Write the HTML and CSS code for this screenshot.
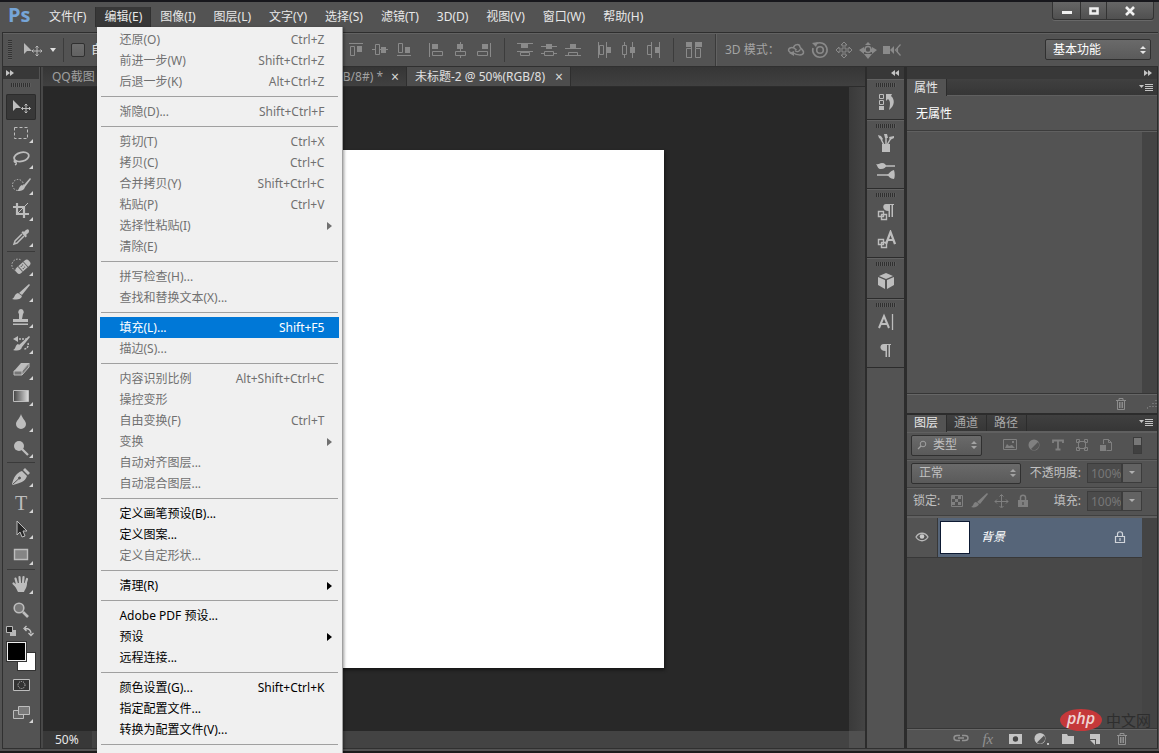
FILE: index.html
```html
<!DOCTYPE html>
<html lang="zh-CN">
<head>
<meta charset="utf-8">
<meta name="viewport" content="width=device-width, initial-scale=1">
<title>未标题-2 @ 50%(RGB/8)</title>
<link rel="stylesheet" href="styles.css">
</head>
<body>
<div class="app">
  <header class="menubar">
    <div class="logo">Ps</div>
    <nav class="menus" aria-label="主菜单">
      <div class="menu"><button class="menu-title">文件(F)</button></div>
      <div class="menu">
        <button class="menu-title is-open" aria-expanded="true">编辑(E)</button>
        <div class="dropdown" role="menu">
          <button class="item" disabled><span>还原(O)</span><kbd>Ctrl+Z</kbd></button>
          <button class="item" disabled><span>前进一步(W)</span><kbd>Shift+Ctrl+Z</kbd></button>
          <button class="item" disabled><span>后退一步(K)</span><kbd>Alt+Ctrl+Z</kbd></button>
          <hr class="rule">
          <button class="item" disabled><span>渐隐(D)...</span><kbd>Shift+Ctrl+F</kbd></button>
          <hr class="rule">
          <button class="item" disabled><span>剪切(T)</span><kbd>Ctrl+X</kbd></button>
          <button class="item" disabled><span>拷贝(C)</span><kbd>Ctrl+C</kbd></button>
          <button class="item" disabled><span>合并拷贝(Y)</span><kbd>Shift+Ctrl+C</kbd></button>
          <button class="item" disabled><span>粘贴(P)</span><kbd>Ctrl+V</kbd></button>
          <button class="item has-sub" disabled><span>选择性粘贴(I)</span></button>
          <button class="item" disabled><span>清除(E)</span></button>
          <hr class="rule">
          <button class="item" disabled><span>拼写检查(H)...</span></button>
          <button class="item" disabled><span>查找和替换文本(X)...</span></button>
          <hr class="rule">
          <button class="item is-active"><span>填充(L)...</span><kbd>Shift+F5</kbd></button>
          <button class="item" disabled><span>描边(S)...</span></button>
          <hr class="rule">
          <button class="item" disabled><span>内容识别比例</span><kbd>Alt+Shift+Ctrl+C</kbd></button>
          <button class="item" disabled><span>操控变形</span></button>
          <button class="item" disabled><span>自由变换(F)</span><kbd>Ctrl+T</kbd></button>
          <button class="item has-sub" disabled><span>变换</span></button>
          <button class="item" disabled><span>自动对齐图层...</span></button>
          <button class="item" disabled><span>自动混合图层...</span></button>
          <hr class="rule">
          <button class="item"><span>定义画笔预设(B)...</span></button>
          <button class="item"><span>定义图案...</span></button>
          <button class="item" disabled><span>定义自定形状...</span></button>
          <hr class="rule">
          <button class="item has-sub"><span>清理(R)</span></button>
          <hr class="rule">
          <button class="item"><span>Adobe PDF 预设...</span></button>
          <button class="item has-sub"><span>预设</span></button>
          <button class="item"><span>远程连接...</span></button>
          <hr class="rule">
          <button class="item"><span>颜色设置(G)...</span><kbd>Shift+Ctrl+K</kbd></button>
          <button class="item"><span>指定配置文件...</span></button>
          <button class="item"><span>转换为配置文件(V)...</span></button>
          <hr class="rule">
        </div>
      </div>
      <div class="menu"><button class="menu-title">图像(I)</button></div>
      <div class="menu"><button class="menu-title">图层(L)</button></div>
      <div class="menu"><button class="menu-title">文字(Y)</button></div>
      <div class="menu"><button class="menu-title">选择(S)</button></div>
      <div class="menu"><button class="menu-title">滤镜(T)</button></div>
      <div class="menu"><button class="menu-title">3D(D)</button></div>
      <div class="menu"><button class="menu-title">视图(V)</button></div>
      <div class="menu"><button class="menu-title">窗口(W)</button></div>
      <div class="menu"><button class="menu-title">帮助(H)</button></div>
    </nav>
    <div class="window-buttons">
      <button aria-label="最小化"><svg width="12" height="12" viewBox="0 0 12 12"><path d="M1 6h10v3H1z" fill="#f0f0f0"/></svg></button>
      <button aria-label="最大化"><svg width="12" height="12" viewBox="0 0 12 12"><path d="M2.500 3.500h7v5h-7z" fill="none" stroke="#f0f0f0" stroke-width="2.600"/></svg></button>
      <button class="close" aria-label="关闭"><svg width="12" height="12" viewBox="0 0 12 12"><path d="M2 2l8 8M10 2l-8 8" stroke="#f0f0f0" stroke-width="2.600"/></svg></button>
    </div>
  </header>

  <div class="options">
    <div class="options-left">
      <span class="grip-v"></span>
      <svg class="move" width="20" height="18" viewBox="0 0 20 18"><path d="M1 2v11l3-3h5z" fill="#b8b8b8"/><path d="M14 5v10M9 10h10M12.500 6.500L14 5l1.500 1.500M12.500 13.500L14 15l1.500-1.500M10.500 8.500L9 10l1.500 1.500M17.500 8.500L19 10l-1.500 1.500" fill="none" stroke="#b8b8b8"/></svg>
      <svg width="8" height="6" viewBox="0 0 8 6"><path d="M1 1h6L4 5z" fill="#e0e0e0"/></svg>
      <span class="divider tight"></span>
      <label class="check"><input type="checkbox">自动</label>
    </div>
    <div class="icons">
      <button class="opt" aria-label="顶对齐"><svg viewBox="0 0 18 18"><path d="M2 2.500h14M3.500 5.500h4v9h-4z"/><path class="f" d="M10 5h5v6h-5z"/></svg></button>
      <button class="opt" aria-label="垂直居中对齐"><svg viewBox="0 0 18 18"><path d="M1 8.500h3M8 8.500h9M4.500 3.500h4v10h-4z"/><path class="f" d="M10 6h5v6h-5z"/></svg></button>
      <button class="opt" aria-label="底对齐"><svg viewBox="0 0 18 18"><path d="M2 14.500h14M3.500 2.500h4v9h-4z"/><path class="f" d="M10 6h5v6h-5z"/></svg></button>
    </div>
    <div class="icons">
      <button class="opt" aria-label="左对齐"><svg viewBox="0 0 18 18"><path d="M2.500 2v14M5.500 10.500h10v4h-10z"/><path class="f" d="M5 3h6v5H5z"/></svg></button>
      <button class="opt" aria-label="水平居中对齐"><svg viewBox="0 0 18 18"><path d="M9.500 1v3M9.500 8v3M9.500 14v3M4.500 10.500h10v4h-10z"/><path class="f" d="M6 3h6v5H6z"/></svg></button>
      <button class="opt" aria-label="右对齐"><svg viewBox="0 0 18 18"><path d="M15.500 2v14M2.500 10.500h10v4h-10z"/><path class="f" d="M7 3h6v5H7z"/></svg></button>
    </div>
    <span class="divider"></span>
    <div class="icons">
      <button class="opt" aria-label="按顶分布"><svg viewBox="0 0 18 18"><path d="M1 2.500h16M1 10.500h16M4.500 11.500h9v3h-9z"/><path class="f" d="M5 3h7v4H5z"/></svg></button>
      <button class="opt" aria-label="垂直居中分布"><svg viewBox="0 0 18 18"><path d="M1 5.500h16M1 12.500h3M14 12.500h3M4.500 10.500h9v4h-9z"/><path class="f" d="M6 3h6v5H6z"/></svg></button>
      <button class="opt" aria-label="按底分布"><svg viewBox="0 0 18 18"><path d="M1 7.500h16M1 14.500h16M4.500 11.500h9v3h-9z"/><path class="f" d="M6 3h6v4H6z"/></svg></button>
    </div>
    <div class="icons">
      <button class="opt" aria-label="按左分布"><svg viewBox="0 0 18 18"><path d="M2.500 1v16M10.500 1v16M3.500 4.500h4v9h-4z"/><path class="f" d="M11 6h4v6h-4z"/></svg></button>
      <button class="opt" aria-label="水平居中分布"><svg viewBox="0 0 18 18"><path d="M4.500 1v3M4.500 14v3M12.500 1v16M2.500 4.500h4v9h-4z"/><path class="f" d="M10 6h5v6h-5z"/></svg></button>
      <button class="opt" aria-label="按右分布"><svg viewBox="0 0 18 18"><path d="M7.500 1v16M15.500 1v16M3.500 4.500h4v9h-4z"/><path class="f" d="M11 6h4v6h-4z"/></svg></button>
    </div>
    <span class="divider"></span>
    <div class="icons">
      <button class="opt" aria-label="自动对齐图层"><svg viewBox="0 0 18 18"><path d="M1.500 7.500h5v9h-5zM10.500 7.500h5v9h-5zM6.500 1v16M10.500 1v6M16.500 1v5"/><path class="f" d="M1 1h5v5H1zM11 1h5v5h-5z"/></svg></button>
    </div>
    <span class="divider light"></span>
    <span class="mode-label">3D 模式：</span>
    <div class="icons">
      <button class="opt" aria-label="旋转 3D 对象"><svg viewBox="0 0 18 18"><path d="M6 12C2 12 0 8.500 3 7c2-1 4.500 0 6.500 2M6.500 6.500c1-3.500 6-4 6.500-.5 1 2 4 3 3.500 6-1 3-7 2-10 0" stroke-width="1.500"/><path d="M8 9.500c2 2 5 1 5.500-2" stroke-width="1.300"/><path class="f" d="M2 12l5-2v5z"/></svg></button>
      <button class="opt" aria-label="滚动 3D 对象"><svg viewBox="0 0 18 18"><path d="M5 3a7.200 7.200 0 1 1-3 4" stroke-width="1.600"/><circle cx="9" cy="9" r="3.300" stroke-width="1.600"/><path class="f" d="M1 2l6-1-2 5z"/></svg></button>
      <button class="opt" aria-label="拖动 3D 对象"><svg viewBox="0 0 18 18"><path d="M9 1l3 3h-2v4h4V6l3 3-3 3v-2h-4v4h2l-3 3-3-3h2v-4H4v2L1 9l3-3v2h4V4H6z"/></svg></button>
      <button class="opt" aria-label="滑动 3D 对象"><svg viewBox="0 0 18 18"><path class="f" d="M0 9l5-3v2h2v3H5v2zM18 9l-5-3v2h-2v3h2v2zM9 18l-4-5h8zM9 1l3 3H6z"/><circle cx="9" cy="8.500" r="3" stroke-width="1.600"/></svg></button>
      <button class="opt" aria-label="缩放 3D 对象"><svg viewBox="0 0 18 18"><path class="f" d="M0 5h7v8H0zM7 9l4-4v8z"/><path d="M17.500 3.500l-5 5.500 5 5.500M14.500 7v4" stroke-width="1.200"/></svg></button>
    </div>
    <span class="select workspace-select">
      <select aria-label="工作区"><option>基本功能</option></select>
      <svg width="8" height="10" viewBox="0 0 8 10"><path d="M1 4l3-3 3 3zM1 6l3 3 3-3z" fill="#e6e6e6"/></svg>
    </span>
  </div>

  <main class="workspace">
    <aside class="toolbar">
      <div class="rail-head left"><svg width="8" height="6" viewBox="0 0 8 6"><path d="M0 0l4 3-4 3zM4 0l4 3-4 3z" fill="#c4c4c4"/></svg></div>
      <div class="grip-h"></div>
      <div class="tools">
        <button class="tool is-active solo" aria-label="移动工具"><svg viewBox="0 0 20 20"><path class="f" d="M2 3v11l3-3h5z"/><path d="M15 7v9M10.500 11.500h9M13.500 8.500L15 7l1.500 1.500M13.500 14.500L15 16l1.500-1.500M12 10l-1.500 1.500L12 13M18 10l1.500 1.500L18 13"/></svg></button>
        <button class="tool" aria-label="矩形选框工具"><svg viewBox="0 0 20 20"><path d="M3.500 4.500h13v11h-13z" stroke-dasharray="3 2"/></svg></button>
        <button class="tool" aria-label="套索工具"><svg viewBox="0 0 20 20"><ellipse cx="10.500" cy="8" rx="7.500" ry="4.500" transform="rotate(-14 10 8)" stroke-width="1.800"/><path d="M4 11c-2 1 0 3 1 2s-1-2-2-1M5 13c1 2-1 3-1 3" stroke-width="1.300"/></svg></button>
        <button class="tool" aria-label="快速选择工具"><svg viewBox="0 0 20 20"><circle cx="7" cy="10" r="5.500" stroke-dasharray="1.500 1.500"/><path class="f" d="M19 3l1 1-6 8-2-1zM11 10l3 2c-1 4-5 4-8 4 2-1 2-5 5-6z"/></svg></button>
        <button class="tool" aria-label="裁剪工具"><svg viewBox="0 0 20 20"><path d="M6 2v11h12M2 6h11v11" stroke-width="2.200"/><path d="M7 12l10-10"/></svg></button>
        <button class="tool" aria-label="吸管工具"><svg viewBox="0 0 20 20"><path class="f" d="M12 4l1 1c3-4 5-3 5-1s-1 2-3 4l1 1-1.500 1.500-4-5z"/><path d="M11 7l-7 7-1 3 3-1 7-7" stroke-width="1.500"/></svg></button>
        <hr class="tool-rule">
        <button class="tool" aria-label="污点修复画笔工具"><svg viewBox="0 0 20 20"><path d="M8 15a6 6 0 1 1 2-11" stroke-dasharray="1.500 1.500"/><g transform="rotate(-42 12 10)"><rect class="f" x="3" y="7" width="17" height="7" rx="3"/><path d="M8 7v7M15 7v7" stroke="#666"/><path d="M10 9h1M12 9h1M10 12h1M12 12h1" stroke="#444"/></g></svg></button>
        <button class="tool" aria-label="画笔工具"><svg viewBox="0 0 20 20"><path class="f" d="M18 2l1 1-8 10-3-2zM7 11l4 3c-1 4-6 4-10 3 3-1 2-5 6-6z"/></svg></button>
        <button class="tool" aria-label="仿制图章工具"><svg viewBox="0 0 20 20"><path class="f" d="M10 1a3 3 0 0 1 2 5l-1 5h6v3H2v-3h6L8 6a3 3 0 0 1 2-5zM2 15.500h15V17H2z"/></svg></button>
        <button class="tool" aria-label="历史记录画笔工具"><svg viewBox="0 0 20 20"><path d="M5 5h8c2 0 3 0 3 1M17 9c1 3-1 6-4 6" stroke-dasharray="2 1" stroke-width="1.500"/><path class="f" d="M2 5l5-3v6zM18 2l1 1-8 10-3-2zM7 10l4 3c-1 4-5 4-9 3 3-1 2-5 5-6z"/></svg></button>
        <button class="tool" aria-label="橡皮擦工具"><svg viewBox="0 0 20 20"><path class="f" d="M10 3h8l-7 8H3z"/><path d="M3 11h8l7-8v4l-7 8H3zM11 11v4" fill="#777"/></svg></button>
        <button class="tool" aria-label="渐变工具"><svg viewBox="0 0 20 20"><defs><linearGradient id="fade"><stop stop-color="#444"/><stop offset="1" stop-color="#ddd"/></linearGradient></defs><path d="M2.500 4.500h15v11h-15z" fill="url(#fade)"/></svg></button>
        <button class="tool" aria-label="模糊工具"><svg viewBox="0 0 20 20"><path class="f" d="M10 2c1 4 5 7 5 10a5 5 0 0 1-10 0c0-3 4-6 5-10z"/></svg></button>
        <button class="tool" aria-label="减淡工具"><svg viewBox="0 0 20 20"><circle class="f" cx="8" cy="8" r="5"/><path d="M11 11l6 6" stroke-width="2.200"/></svg></button>
        <hr class="tool-rule">
        <button class="tool" aria-label="钢笔工具"><svg viewBox="0 0 20 20"><path class="f" d="M12 3l2-2 5 5-2 2zM11 4l5 5c-2 6-7 7-14 9l-1-1C3 10 5 6 11 4z"/><circle cx="8.500" cy="11" r="1" fill="#555" stroke="#555"/><path d="M2 17l6-5.500M11.500 3.500l5 5" stroke="#555"/></svg></button>
        <button class="tool letter" aria-label="横排文字工具">T</button>
        <button class="tool" aria-label="路径选择工具"><svg viewBox="0 0 20 20"><path d="M6 2v14l3-3 2 5 3-1-2-5h4z" fill="#292929"/></svg></button>
        <button class="tool" aria-label="矩形工具"><svg viewBox="0 0 20 20"><path d="M3.500 4.500h13v10h-13z" fill="#858585" stroke-width="1.400"/></svg></button>
        <hr class="tool-rule">
        <button class="tool" aria-label="抓手工具"><svg viewBox="0 0 20 20"><path d="M6 10L4.500 4.500M9 9L8.500 3M12 9l.5-6M14.500 10L16 5M6 13L2.500 9.500" stroke-width="2.200" stroke-linecap="round"/><path class="f" d="M5 9h11c0 5-2 6-3 9H7l-3-6z"/></svg></button>
        <button class="tool solo" aria-label="缩放工具"><svg viewBox="0 0 20 20"><circle cx="8" cy="8" r="4.800" fill="#777" stroke-width="1.600"/><path d="M12 12l5 5" stroke-width="2.600"/></svg></button>
      </div>
      <div class="mini-tools">
        <button aria-label="默认前景色和背景色"><svg width="12" height="12" viewBox="0 0 12 12"><path d="M5 5h6v6H5z" fill="#b8b8b8"/><path d="M1.500 1.500h6v6h-6z" fill="#222" stroke="#b8b8b8"/></svg></button>
        <button aria-label="切换前景色和背景色"><svg width="12" height="12" viewBox="0 0 12 12"><path d="M3 3.500c4 0 6 1 6 5M4.500 1L2 3.500 4.500 6M6.500 8L9 10.500 11.500 8" fill="none" stroke="#c4c4c4" stroke-width="1.300"/></svg></button>
      </div>
      <div class="swatches">
        <button class="swatch front" aria-label="前景色"></button>
        <button class="swatch back" aria-label="背景色"></button>
      </div>
      <button class="tool solo" aria-label="快速蒙版"><svg viewBox="0 0 20 20"><path d="M2.500 4.500h16v11h-16z" fill="#333"/><circle cx="10.500" cy="10" r="3.500" stroke-dasharray="1.200 1"/></svg></button>
      <button class="tool" aria-label="屏幕模式"><svg viewBox="0 0 20 20"><path d="M2.500 7.500h10v8h-10z" fill="#666"/><path d="M7.500 3.500h11v8h-11z" fill="#7a7a7a"/></svg></button>
    </aside>

    <section class="document">
      <div class="tabs">
        <div class="tab">
          <button class="tab-name">QQ截图</button>
          <span>RGB/8#) *</span>
          <button class="tab-close" aria-label="关闭">×</button>
        </div>
        <div class="tab is-active">
          <button class="tab-name">未标题-2 @ 50%(RGB/8)</button>
          <button class="tab-close" aria-label="关闭">×</button>
        </div>
      </div>
      <div class="canvas-area">
        <div class="canvas"><div class="sheet"></div></div>
        <div class="scroll-v"></div>
      </div>
      <div class="status">
        <input class="zoom" value="50%" aria-label="缩放比例">
        <div class="scroll-h"></div>
        <div class="scroll-corner"></div>
      </div>
    </section>

    <aside class="dock">
      <div class="rail-head right"><svg width="8" height="6" viewBox="0 0 8 6"><path d="M4 0L0 3l4 3zM8 0L4 3l4 3z" fill="#c4c4c4"/></svg></div>
      <div class="dock-group">
        <button aria-label="历史记录"><svg viewBox="0 0 20 20"><path d="M3.500 2.500h4v4h-4zM3.500 8.500h4v4h-4z"/><path class="f" d="M3 14h5v4H3zM10 2h6l-1 2c4 3 4 10-2 14 1-4 2-9-1-11l-2 2z"/></svg></button>
      </div>
      <div class="dock-group">
        <button aria-label="画笔预设"><svg viewBox="0 0 20 20"><path class="f" d="M6 11h8v8H6z"/><path class="f" d="M2 2l3 1 2 3-1 1-3-2zM8 1l3 0 1 4H9zM13 4l5-1v2l-4 2z"/><path d="M5 6l3 6M10 4v8M15 5l-4 7" stroke-width="1.500"/></svg></button>
        <button aria-label="画笔"><svg viewBox="0 0 20 20"><path d="M8 5h11M1 14h11" stroke-width="1.700"/><path class="f" d="M0 3c3 1 3-1 6-1s4 2 4 3-2 3-5 3-3-2-5-5zM11 14c2-1 3-4 7-5 1 3 1 7 0 9-4 0-5-3-7-4z"/></svg></button>
      </div>
      <div class="dock-group">
        <button aria-label="段落样式"><svg viewBox="0 0 20 20"><path class="f" d="M10 2h8v1h-1v12h-1.500V3H14v12h-1.500V9C6 9 6 2 10 2z"/><path d="M2.500 9.500h5v5h-5zM5.500 12.500h5v5h-5z" stroke-width="1.400"/></svg></button>
        <button aria-label="字符样式"><svg viewBox="0 0 20 20"><path d="M10 14l4.500-12L19 14M11 10h7" stroke-width="2.200"/><path d="M2.500 9.500h5v5h-5zM5.500 12.500h5v5h-5z" stroke-width="1.400"/></svg></button>
      </div>
      <div class="dock-group">
        <button aria-label="3D"><svg viewBox="0 0 20 20"><path class="f" d="M10 2l7 3-7 3-7-3zM2 6l7 3v9l-7-4zM18 6l-7 3v9l7-4z"/></svg></button>
      </div>
      <div class="dock-group">
        <button aria-label="字符"><svg viewBox="0 0 20 20"><path d="M3 16L8 4l5 12M4.500 12h7" stroke-width="2"/><path d="M16.500 2v16" stroke-width="1.300"/></svg></button>
        <button aria-label="段落"><svg viewBox="0 0 20 20"><path class="f" d="M8 4h7v1h-1v12h-1.500V5H11v12H9.500v-6C3 11 3 4 8 4z"/></svg></button>
      </div>
    </aside>

    <aside class="panels">
      <div class="rail-head right"><svg width="8" height="6" viewBox="0 0 8 6"><path d="M0 0l4 3-4 3zM4 0l4 3-4 3z" fill="#c4c4c4"/></svg></div>
      <section class="panel">
        <div class="panel-tabs">
          <button class="panel-tab is-active">属性</button>
          <button class="panel-menu" aria-label="面板菜单"><svg width="14" height="9" viewBox="0 0 14 9"><path d="M0 2h5L2.500 5z" fill="#c4c4c4"/><path d="M6 1.500h8M6 3.500h8M6 5.500h8M6 7.500h8" stroke="#c4c4c4"/></svg></button>
        </div>
        <div class="prop-title">无属性</div>
        <div class="panel-body"><div class="panel-fill"></div><div class="panel-scroll"></div></div>
        <div class="panel-foot prop-foot">
          <button class="foot" aria-label="删除"><svg viewBox="0 0 16 16"><path d="M3 4.500h10M6 4V2.500h4V4M4.500 5v8.500h7V5M6.500 6v6M8 6v6M9.500 6v6" stroke="#8c8c8c"/></svg></button>
          <svg width="10" height="10" viewBox="0 0 10 10"><path d="M9 1v9M6 4v6M3 7v3M0 9h2" stroke="#808080" stroke-width="1.500" stroke-dasharray="1 2"/></svg>
        </div>
      </section>
      <section class="panel layers">
        <div class="panel-tabs">
          <button class="panel-tab is-active">图层</button>
          <button class="panel-tab">通道</button>
          <button class="panel-tab">路径</button>
          <button class="panel-menu" aria-label="面板菜单"><svg width="14" height="9" viewBox="0 0 14 9"><path d="M0 2h5L2.500 5z" fill="#c4c4c4"/><path d="M6 1.500h8M6 3.500h8M6 5.500h8M6 7.500h8" stroke="#c4c4c4"/></svg></button>
        </div>
        <div class="row filter-row">
          <span class="select kind-select">
            <svg class="lens" width="10" height="10" viewBox="0 0 10 10"><circle cx="6" cy="4" r="2.800" fill="none" stroke="#a0a0a0"/><path d="M4 6L1 9" stroke="#a0a0a0" stroke-width="1.300"/></svg>
            <select aria-label="筛选类型"><option>类型</option></select>
            <svg width="8" height="10" viewBox="0 0 8 10"><path d="M1 4l3-3 3 3zM1 6l3 3 3-3z" fill="#a4a4a4"/></svg>
          </span>
          <div class="icons dim">
            <button class="opt" aria-label="像素图层"><svg viewBox="0 0 18 18"><path d="M2.500 3.500h13v10h-13z"/><path class="f" d="M4 12l2-4 2 2 3-1 3 3zM11 5h2v2h-2z"/></svg></button>
            <button class="opt" aria-label="调整图层"><svg viewBox="0 0 18 18"><circle class="f" cx="9" cy="9" r="5.500"/><path d="M6 13a5 5 0 0 0 7-7z" fill="#555" stroke="none"/></svg></button>
            <button class="opt" aria-label="文字图层"><svg viewBox="0 0 18 18"><path d="M4 7V4.500h10V7M9 4v10M6.500 13.500h5" stroke-width="1.800"/></svg></button>
            <button class="opt" aria-label="形状图层"><svg viewBox="0 0 18 18"><path d="M5.500 5.500h7v7h-7zM3.500 3.500h3v3h-3zM11.500 3.500h3v3h-3zM3.500 11.500h3v3h-3zM11.500 11.500h3v3h-3z"/></svg></button>
            <button class="opt" aria-label="智能对象"><svg viewBox="0 0 18 18"><path d="M6.500 8V3.500h5l3 3v8h-5M11.500 3.500v3h3"/><path class="f" d="M3 9h6v6H3z"/></svg></button>
          </div>
          <button class="switch" aria-label="图层过滤开关"></button>
        </div>
        <div class="row">
          <span class="select blend-select">
            <select aria-label="混合模式"><option>正常</option></select>
            <svg width="8" height="10" viewBox="0 0 8 10"><path d="M1 4l3-3 3 3zM1 6l3 3 3-3z" fill="#a4a4a4"/></svg>
          </span>
          <label class="field">不透明度: <input value="100%"></label>
          <button class="drop" aria-label="不透明度滑块"><svg width="6" height="4" viewBox="0 0 6 4"><path d="M0 0h6L3 3z" fill="#b0b0b0"/></svg></button>
        </div>
        <div class="row">
          <span class="lock-label">锁定:</span>
          <div class="icons dim locks">
            <button class="opt" aria-label="锁定透明像素"><svg viewBox="0 0 18 18"><path d="M3.500 3.500h11v11h-11z"/><path class="f" d="M4 4h3v3H4zM10 4h3v3h-3zM7 7h3v3H7zM4 10h3v3H4zM10 10h3v3h-3z"/></svg></button>
            <button class="opt" aria-label="锁定图像像素"><svg viewBox="0 0 18 18"><path class="f" d="M17 1l1 1-8 10-3-2zM6 10l3 2c-1 3-5 4-8 3 3-1 2-5 5-5z"/></svg></button>
            <button class="opt" aria-label="锁定位置"><svg viewBox="0 0 18 18"><path d="M9.500 3v12M3 9.500h13M7.500 4.500l2-2 2 2M7.500 14l2 2 2-2M5 7.500l-2 2 2 2M14 7.500l2 2-2 2"/></svg></button>
            <button class="opt" aria-label="锁定全部"><svg viewBox="0 0 18 18"><path d="M6.500 8V5.500c0-3 5-3 5 0V8" stroke-width="1.500"/><path class="f" d="M4 8h10v7H4z"/><path d="M9 10v3" stroke="#444"/></svg></button>
          </div>
          <label class="field">填充: <input value="100%"></label>
          <button class="drop" aria-label="填充滑块"><svg width="6" height="4" viewBox="0 0 6 4"><path d="M0 0h6L3 3z" fill="#b0b0b0"/></svg></button>
        </div>
        <div class="panel-body layer-list">
          <div class="panel-fill">
            <div class="layer">
              <button class="eye" aria-label="显示图层"><svg width="14" height="10" viewBox="0 0 14 10"><path d="M1 5c3-5 9-5 12 0-3 5-9 5-12 0z" fill="none" stroke="#b8b8b8" stroke-width="1.300"/><circle cx="7" cy="4.500" r="2.300" fill="#c8c8c8"/></svg></button>
              <button class="layer-main">
                <span class="thumb"></span>
                <span class="layer-name">背景</span>
                <svg width="12" height="14" viewBox="0 0 12 14"><path d="M3.500 6V4c0-3 5-3 5 0v2M1.500 6.500h9v6h-9zM6 8v3" fill="none" stroke="#d0d4da" stroke-width="1.200"/></svg>
              </button>
            </div>
          </div>
          <div class="panel-scroll"></div>
        </div>
        <div class="panel-foot layer-foot">
          <button class="foot" aria-label="链接图层"><svg viewBox="0 0 16 16"><path d="M7 4.500H4c-4 0-4 5 0 5h3M9 4.500h3c4 0 4 5 0 5H9M5 7h6" stroke="#929292" stroke-width="1.400"/></svg></button>
          <button class="foot fx" aria-label="图层样式">fx</button>
          <button class="foot" aria-label="添加蒙版"><svg viewBox="0 0 16 16"><path class="f" d="M2 3h13v10H2z"/><circle cx="8.500" cy="8" r="2.700" fill="#444" stroke="none"/></svg></button>
          <button class="foot" aria-label="调整图层"><svg viewBox="0 0 16 16"><circle class="f" cx="7" cy="7.500" r="5.500"/><path d="M4 11.500a5 5 0 0 0 7-7z" fill="#555"/><path class="f" d="M14 12h2v2h-2z"/></svg></button>
          <button class="foot" aria-label="新建组"><svg viewBox="0 0 16 16"><path class="f" d="M2 3h5l1 2h6v8H2z"/></svg></button>
          <button class="foot" aria-label="新建图层"><svg viewBox="0 0 16 16"><path class="f" d="M3 3h10v10H9V8H3zM3 9h5v5z"/></svg></button>
          <button class="foot" aria-label="删除图层"><svg viewBox="0 0 16 16"><path d="M3 4.500h10M6 4V2.500h4V4M4.500 5v8.500h7V5M6.500 6v6M8 6v6M9.500 6v6" stroke="#929292"/></svg></button>
        </div>
      </section>
    </aside>
  </main>
  <div class="watermark"><span class="badge">php</span><span>中文网</span></div>
</div>
</body>
</html>
```

FILE: styles.css
```css
* { box-sizing: border-box; }

body {
  margin: 0;
  background: #1c1c1c;
  color: #e8e8e8;
  font: 12px/16px "Noto Sans", "Noto Sans CJK SC", sans-serif;
}

button, input, select, kbd { font: inherit; color: inherit; }
button { padding: 0; border: 0; background: none; }
svg { display: block; flex: none; }

.app {
  position: relative;
  display: flex;
  flex-direction: column;
  height: 100vh;
  overflow: hidden;
  padding: 0 1px 4px 2px;
  background: linear-gradient(#1c1c1c, #1c1c1c) bottom / 100% 2px no-repeat #535353;
  border-top: 2px solid #17171c;
}

/* menu bar */
.menubar {
  display: flex;
  height: 31px;
  flex: none;
  border-bottom: 1px solid #2e2e2e;
}
.logo {
  width: 38px;
  padding-left: 6px;
  color: #76a5d8;
  font: bold 20px/26px "Open Sans", sans-serif;
}
.menus { display: flex; align-items: flex-start; padding-top: 5px; }
.menu { position: relative; }
.menu-title {
  display: block;
  height: 20px;
  padding: 0 8px;
  border: 1px solid transparent;
  border-width: 0 1px;
  white-space: nowrap;
}
.menu-title.is-open { background: #383838; border-color: #303030; }

.dropdown {
  position: absolute;
  z-index: 10;
  top: 20px;
  left: 2px;
  width: 246px;
  padding: 2px 3px 12px;
  background: #f0f0f0;
  border-right: 1px solid #a0a0a0;
  box-shadow: 1px 1px 3px rgba(0, 0, 0, .4);
  color: #000;
}
.item {
  display: flex;
  align-items: center;
  justify-content: space-between;
  width: 100%;
  height: 21px;
  padding: 0 15px 0 19px;
  white-space: nowrap;
}
.item:disabled { color: #707070; }
.item.is-active { background: #0078d7; color: #fff; }
.item.has-sub { padding-right: 7px; }
.item.has-sub::after {
  content: "";
  border: 4px solid transparent;
  border-left: 5px solid currentColor;
  border-right: 0;
}
.rule {
  height: 9px;
  margin: 0 1px;
  border: 0;
  background: linear-gradient(#a0a0a0, #a0a0a0) 0 4px / 100% 1px no-repeat;
}

.window-buttons { display: flex; margin-left: auto; margin-right: 4px; height: 18px; }
.window-buttons button {
  display: grid;
  place-items: center;
  width: 27px;
  border: 1px solid #333;
  border-top: 0;
  margin-left: -1px;
  background: linear-gradient(#666, #505050);
  box-shadow: 0 1px #686868;
}
.window-buttons button:first-child { width: 29px; border-bottom-left-radius: 3px; }
.window-buttons .close { width: 48px; border-bottom-right-radius: 3px; }

/* options bar */
.options {
  display: flex;
  align-items: center;
  height: 34px;
  flex: none;
  border: 1px solid #303030;
  border-width: 0 0 1px 1px;
  box-shadow: inset 0 1px #626262;
}
.options-left {
  display: flex;
  align-items: center;
  width: 341px;
  padding-left: 5px;
  white-space: nowrap;
}
.move { margin: 0 6px 0 11px; }
.grip-v {
  width: 4px;
  height: 20px;
  background: repeating-linear-gradient(#333 0 1px, #5c5c5c 1px 2px);
}
.divider { width: 1px; height: 24px; margin: 0 8px; background: #3c3c3c; }
.divider.tight { margin: 0 7px 0 6px; }
.divider.light { height: 32px; background: #3a3a3a; box-shadow: 1px 0 #626262; margin: 0 9px; }
.check { display: flex; align-items: center; gap: 6px; }
.check input {
  appearance: none;
  width: 14px;
  height: 14px;
  margin: 0;
  border: 1px solid #303030;
  border-radius: 2px;
  background: linear-gradient(#6c6c6c, #626262);
}
.icons { display: flex; }
.icons + .icons { margin-left: 8px; }
.opt { display: grid; place-items: center; width: 24px; height: 24px; }
.opt svg { width: 18px; height: 18px; fill: none; stroke: #8a8a8a; }
.opt .f { fill: #8a8a8a; stroke: none; }
.mode-label { color: #a4a4a4; white-space: nowrap; margin-right: 4px; }
.select { position: relative; display: flex; align-items: center; }
.select select {
  appearance: none;
  width: 100%;
  height: 21px;
  padding: 0 7px;
  border: 1px solid #303030;
  border-radius: 2px;
  background: linear-gradient(#6a6a6a, #5a5a5a);
  outline: 0;
}
.select svg { position: absolute; right: 4px; }
.workspace-select { width: 106px; margin: 0 7px 0 auto; color: #fff; }

/* workspace */
.workspace { display: flex; flex: 1; min-height: 0; border: 1px solid #303030; border-width: 0 0 1px 1px; }
.rail-head {
  display: flex;
  align-items: center;
  height: 12px;
  flex: none;
  padding: 0 5px;
  background: #383838;
}
.rail-head.right { justify-content: flex-end; }

.toolbar {
  display: flex;
  flex-direction: column;
  width: 38px;
  flex: none;
  padding-right: 1px;
  border-right: 1px solid #2c2c2c;
}
.toolbar > .rail-head { padding: 0 3px; }
.grip-h, .dock-group::before {
  width: 20px;
  height: 4px;
  background: repeating-linear-gradient(90deg, #303030 0 1px, #5c5c5c 1px 2px);
}
.grip-h { flex: none; margin: 4px auto 7px; }
.tool {
  position: relative;
  display: grid;
  place-items: center;
  width: 36px;
  height: 26px;
  flex: none;
}
.tool svg, .dock-group svg { width: 20px; height: 20px; fill: none; stroke: #bdbdbd; }
.tool .f, .dock-group .f { fill: #bdbdbd; stroke: none; }
.tool::after {
  content: "";
  position: absolute;
  right: 6px;
  bottom: 3px;
  border: 2px solid #d4d4d4;
  border-top-color: transparent;
  border-left-color: transparent;
}
.tool.solo::after { display: none; }
.tool.is-active { width: 30px; margin: 0 auto; border-radius: 2px; background: #383838; box-shadow: inset 0 0 0 1px #2c2c2c; }
.tool.letter { color: #bdbdbd; font: 20px/24px "Liberation Serif", serif; }
.tool-rule { height: 1px; margin: 1px 4px; border: 0; background: #3a3a3a; }
.mini-tools { display: flex; justify-content: space-between; padding: 2px 5px 5px 2px; }
.swatches { position: relative; height: 30px; margin: 0 4px; }
.swatch { position: absolute; width: 19px; height: 19px; border: 1px solid #333; }
.front { z-index: 1; left: 0; top: 0; background: #000; border-color: #eee; box-shadow: 0 0 0 1px #333; }
.back { left: 10px; top: 10px; background: #fff; }
.swatches + .tool { margin: 0 0 2px; }

.document { display: flex; flex: 1; flex-direction: column; min-width: 0; border-left: 2px solid #484848; }
.tabs { display: flex; height: 20px; flex: none; background: linear-gradient(#363636, #404040); border-bottom: 1px solid #2c2c2c; }
.tab {
  display: flex;
  align-items: center;
  width: 363px;
  padding: 0 6px 0 9px;
  color: #a0a0a0;
  white-space: nowrap;
}
.tab-name { flex: 1; text-align: left; }
.tab-close { width: 10px; margin-left: 7px; color: #d8d8d8; font-size: 14px; line-height: 16px; }
.tab.is-active { width: auto; padding-left: 8px; background: #4d4d4d; color: #e0e0e0; border: 1px solid #2e2e2e; border-width: 0 1px; }
.tab.is-active .tab-close { margin-left: 9px; }
.canvas-area { display: flex; flex: 1; min-height: 0; }
.canvas { display: grid; place-items: center; flex: 1; background: #282828; }
.sheet { width: 54%; aspect-ratio: 435 / 518; background: #fff; box-shadow: 1px 2px 3px #161616; }
.scroll-v { width: 16px; background: linear-gradient(90deg, #3a3a3a, #444); }
.status { display: flex; height: 17px; flex: none; }
.zoom { width: 49px; padding: 0 0 0 12px; border: 0; background: #383838; outline: 0; line-height: 17px; }
.scroll-h { flex: 1; background: #434343; }
.scroll-corner { width: 16px; background: #505050; }

.dock {
  width: 42px;
  flex: none;
  border: solid #2c2c2c;
  border-width: 0 3px 0 2px;
}
.dock-group {
  display: flex;
  flex-direction: column;
  align-items: center;
  padding: 4px 0 3px;
  border-bottom: 1px solid #2c2c2c;
  box-shadow: inset 0 1px #626262;
}
.dock-group::before { content: ""; margin-bottom: 1px; }
.dock-group button { display: grid; place-items: center; width: 28px; height: 28px; }

/* panels */
.panels { display: flex; flex-direction: column; width: 251px; flex: none; border-right: 1px solid #2c2c2c; }
.panel { display: flex; flex-direction: column; flex: 1; min-height: 0; }
.layers { border-top: 2px solid #2c2c2c; }
.panel-tabs {
  display: flex;
  height: 17px;
  flex: none;
  background: linear-gradient(#404040, #363636);
  border-bottom: 1px solid #606060;
}
.panel-tab { padding: 0 8px 0 7px; color: #a8a8a8; border-right: 1px solid #2c2c2c; }
.panel-tab.is-active { height: 17px; background: #535353; color: #e8e8e8; }
.panel-menu { margin: 0 4px 0 auto; }
.prop-title { padding: 10px 9px 8px; border-bottom: 1px solid #3c3c3c; color: #fff; }
.panel-body { display: flex; flex: 1; min-height: 0; border-top: 1px solid #606060; }
.panel-fill { flex: 1; }
.panel-scroll { width: 15px; background: #444; }
.panel-foot { display: flex; align-items: center; height: 19px; flex: none; border-top: 1px solid #666; box-shadow: 0 -1px #363636; }
.prop-foot { justify-content: flex-end; gap: 18px; }
.foot { display: grid; place-items: center; width: 16px; height: 16px; }
.foot svg { width: 16px; height: 16px; fill: none; }
.foot .f { fill: #c4c4c4; }
.row {
  display: flex;
  align-items: center;
  height: 28px;
  flex: none;
  padding: 0 15px 0 4px;
  color: #c0c0c0;
  border-bottom: 1px solid #404040;
  box-shadow: inset 0 1px #606060;
}
.filter-row { justify-content: space-between; }
.kind-select { width: 71px; }
.kind-select select { padding-left: 21px; }
.kind-select .lens { position: absolute; left: 6px; right: auto; }
.dim .opt svg { stroke: #808080; }
.dim .opt .f { fill: #808080; }
.switch { width: 9px; height: 17px; border: 1px solid #3c3c3c; background: linear-gradient(#777 0 7px, #404040 7px); }
.blend-select { width: 110px; }
.field { display: flex; align-items: center; gap: 6px; margin-left: auto; }
.field input {
  width: 35px;
  height: 20px;
  padding: 0 0 0 3px;
  border: 1px solid #3c3c3c;
  background: #4b4b4b;
  color: #777;
  outline: 0;
}
.drop { display: grid; place-items: center; width: 20px; height: 20px; background: #626262; border: 1px solid #3c3c3c; }
.lock-label { margin-left: 2px; }
.locks { margin-left: 6px; }
.locks .opt { width: 22px; }
.layer-list { background: #484848; border-top-width: 2px; }
.layer { display: flex; height: 40px; border-bottom: 1px solid #383838; }
.eye { display: grid; place-items: center; width: 31px; background: #535353; border-right: 1px solid #383838; }
.layer-main { display: flex; flex: 1; align-items: center; padding: 0 16px 0 2px; background: #566579; color: #fff; }
.thumb { width: 30px; height: 33px; margin-right: 11px; background: #fff; border: 1px solid #0d1a33; }
.layer-name { flex: 1; text-align: left; font-style: italic; }
.layer-foot { padding: 0 27px 0 46px; justify-content: space-between; }
.fx { color: #929292; font: italic 15px/16px "Liberation Serif", serif; }

.watermark {
  position: absolute;
  right: 8px;
  bottom: 22px;
  display: flex;
  align-items: center;
  gap: 4px;
  color: #2e2e2e;
  font-size: 15px;
  line-height: 22px;
}
.badge {
  width: 42px;
  height: 22px;
  border-radius: 50%;
  background: #c5383a;
  color: #efd3d3;
  font: italic 600 16px/19px "Open Sans", sans-serif;
  text-align: center;
}
```
